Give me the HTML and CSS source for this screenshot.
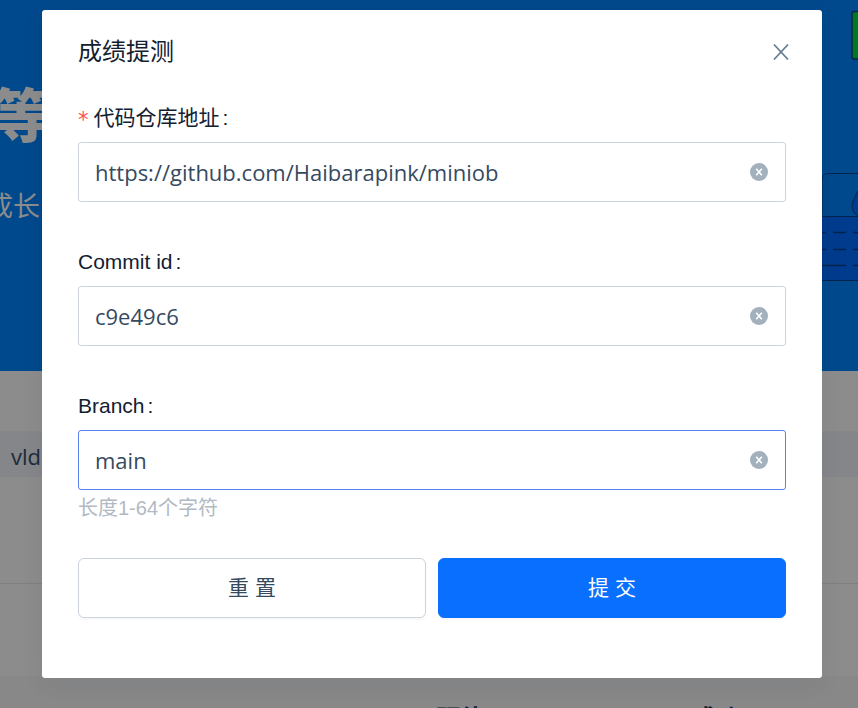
FILE: index.html
```html
<!DOCTYPE html>
<html lang="zh-CN">
<head>
<meta charset="utf-8">
<meta name="viewport" content="width=device-width, initial-scale=1">
<title>成绩提测</title>
<link rel="stylesheet" href="styles.css">
</head>
<body>
<div class="page">
  <section class="hero">
    <div class="hero-copy">
      <h1 class="hero-title">等</h1>
      <p class="hero-text">成长</p>
    </div>
    <svg class="hero-art" width="58" height="371" viewBox="0 0 58 371" aria-hidden="true">
      <g stroke="#00244b" stroke-width="1">
        <rect x="52" y="11.500" width="40" height="47.500" rx="2" fill="#007925" stroke-width="1.500"/>
        <path d="M22 215V180q0-6.500 6-6.500H58" fill="none"/>
        <rect x="10" y="216.500" width="60" height="64" fill="#003b8d"/>
        <path d="M58 191L53 201q-3 9 3 13.500l2 1" fill="#003b8d"/>
        <path d="M14 232.500h12m7 0h13m7 0h5M14 249.500h12m7 0h13m7 0h5M14 265.500h32m7 0h5" fill="none" stroke-width="1.500"/>
      </g>
    </svg>
  </section>
  <div class="tab-row"><span>vldb</span></div>
  <div class="list-row"></div>
  <div class="list-row list-row-last"></div>
  <div class="list-head"><b>预估</b><b>成功</b></div>
</div>
<div class="overlay">
  <form class="dialog" role="dialog" aria-labelledby="dialog-title">
    <header class="dialog-head">
      <h2 id="dialog-title">成绩提测</h2>
      <button class="icon-button" type="button" aria-label="关闭">
        <svg width="18" height="18" viewBox="0 0 18 18"><path d="M2 1.500L16 16.500M16 1.500L2 16.500" fill="none" stroke="#667d91" stroke-width="1.800"/></svg>
      </button>
    </header>
    <div class="field">
      <label for="repo"><span class="required">*</span>代码仓库地址<span class="colon">:</span></label>
      <div class="control">
        <input id="repo" type="text" value="https://github.com/Haibarapink/miniob" required>
        <button class="icon-button" type="button" aria-label="清空">
          <svg width="18" height="18" viewBox="0 0 18 18"><circle cx="9" cy="9" r="9" fill="#a3b1bf"/><path d="M6.200 5.800L11.800 12.200M11.800 5.800L6.200 12.200" stroke="#fff" stroke-width="1.600"/></svg>
        </button>
      </div>
    </div>
    <div class="field">
      <label for="commit">Commit id<span class="colon">:</span></label>
      <div class="control">
        <input id="commit" type="text" value="c9e49c6">
        <button class="icon-button" type="button" aria-label="清空">
          <svg width="18" height="18" viewBox="0 0 18 18"><circle cx="9" cy="9" r="9" fill="#a3b1bf"/><path d="M6.200 5.800L11.800 12.200M11.800 5.800L6.200 12.200" stroke="#fff" stroke-width="1.600"/></svg>
        </button>
      </div>
    </div>
    <div class="field">
      <label for="branch">Branch<span class="colon">:</span></label>
      <div class="control control-active">
        <input id="branch" type="text" value="main" aria-describedby="branch-help">
        <button class="icon-button" type="button" aria-label="清空">
          <svg width="18" height="18" viewBox="0 0 18 18"><circle cx="9" cy="9" r="9" fill="#a3b1bf"/><path d="M6.200 5.800L11.800 12.200M11.800 5.800L6.200 12.200" stroke="#fff" stroke-width="1.600"/></svg>
        </button>
      </div>
      <p class="help" id="branch-help">长度1-64个字符</p>
    </div>
    <div class="actions">
      <button class="button" type="reset">重 置</button>
      <button class="button button-primary" type="submit">提 交</button>
    </div>
  </form>
</div>
</body>
</html>
```
FILE: styles.css
```css
* {
  box-sizing: border-box;
}

body {
  margin: 0;
  font-family: "Liberation Sans", "Noto Sans CJK SC", sans-serif;
  color: #132030;
}

h1, h2, p {
  margin: 0;
  font-weight: 400;
}

.page {
  height: 100vh;
  overflow: hidden;
  background: #8c8c8c;
}

.hero {
  display: flex;
  justify-content: space-between;
  background: #00498c;
}

.hero-copy {
  display: flex;
  flex-direction: column;
  align-items: flex-end;
  width: 40px;
  padding-top: 77px;
  color: #8c8c8c;
  white-space: nowrap;
}

.hero-title {
  margin-right: -10px;
  font-size: 58px;
  line-height: 80px;
  font-weight: 900;
}

.hero-text {
  margin-top: 32px;
  font-size: 27px;
  line-height: 36px;
}

.hero-art {
  display: block;
}

.tab-row {
  display: flex;
  align-items: flex-end;
  height: 106px;
  padding-left: 11px;
  background: linear-gradient(#8c8c8c 60px, #848689 60px);
  color: #1c2b3a;
  font: 22px/42px "Open Sans", sans-serif;
}

.list-row {
  height: 107px;
  border-bottom: 1px solid #7e8083;
}

.list-row-last {
  height: 92px;
  border-bottom: 0;
}

.list-head {
  display: grid;
  grid-template-columns: 256px 1fr;
  padding: 27px 0 0 436px;
  background: #888;
  font-size: 24px;
  line-height: 32px;
}

.overlay {
  position: absolute;
  inset: 0;
  padding: 10px 36px 30px 42px;
}

.dialog {
  padding: 24px 36px 60px;
  border-radius: 3px;
  background: #fff;
  box-shadow: 0 6px 24px rgba(0, 32, 64, 0.06);
}

.dialog-head {
  display: flex;
  align-items: center;
  justify-content: space-between;
  margin-bottom: 24px;
}

.dialog-head h2 {
  font-size: 24px;
  line-height: 36px;
}

.icon-button {
  display: flex;
  padding: 0;
  border: 0;
  background: none;
}

.dialog-head .icon-button {
  margin-right: -4px;
}

.field {
  margin-bottom: 36px;
}

.field label {
  display: flex;
  align-items: center;
  height: 48px;
  font-size: 21px;
  line-height: 48px;
}

.required {
  margin-right: 5px;
  padding-top: 4px;
  color: #ff4d4f;
  font-size: 21px;
  font-family: "DejaVu Sans", sans-serif;
}

.colon {
  margin-left: 3px;
}

.control {
  display: flex;
  align-items: center;
  height: 60px;
  padding: 0 17px 0 16px;
  border: 1px solid #cdd3dc;
  border-radius: 3px;
}

.control-active {
  border-color: #5a7fee;
}

.control input {
  flex: 1;
  min-width: 0;
  padding: 0;
  border: 0;
  outline: 0;
  background: none;
  color: #364a5f;
  font: 22px/32px "Open Sans", sans-serif;
}

.help {
  padding-top: 4px;
  color: #b1b9c3;
  font-size: 20px;
  line-height: 28px;
}

.actions {
  display: grid;
  grid-template-columns: 1fr 1fr;
  gap: 12px;
}

.button {
  height: 60px;
  border: 1px solid #cdd3dc;
  border-radius: 6px;
  background: #fff;
  box-shadow: 0 2px 2px rgba(0, 0, 0, 0.03);
  color: #364a5f;
  font: 21px/32px "Liberation Sans", "Noto Sans CJK SC", sans-serif;
}

.button-primary {
  border-color: #086fff;
  background: #086fff;
  color: #fff;
}
```
